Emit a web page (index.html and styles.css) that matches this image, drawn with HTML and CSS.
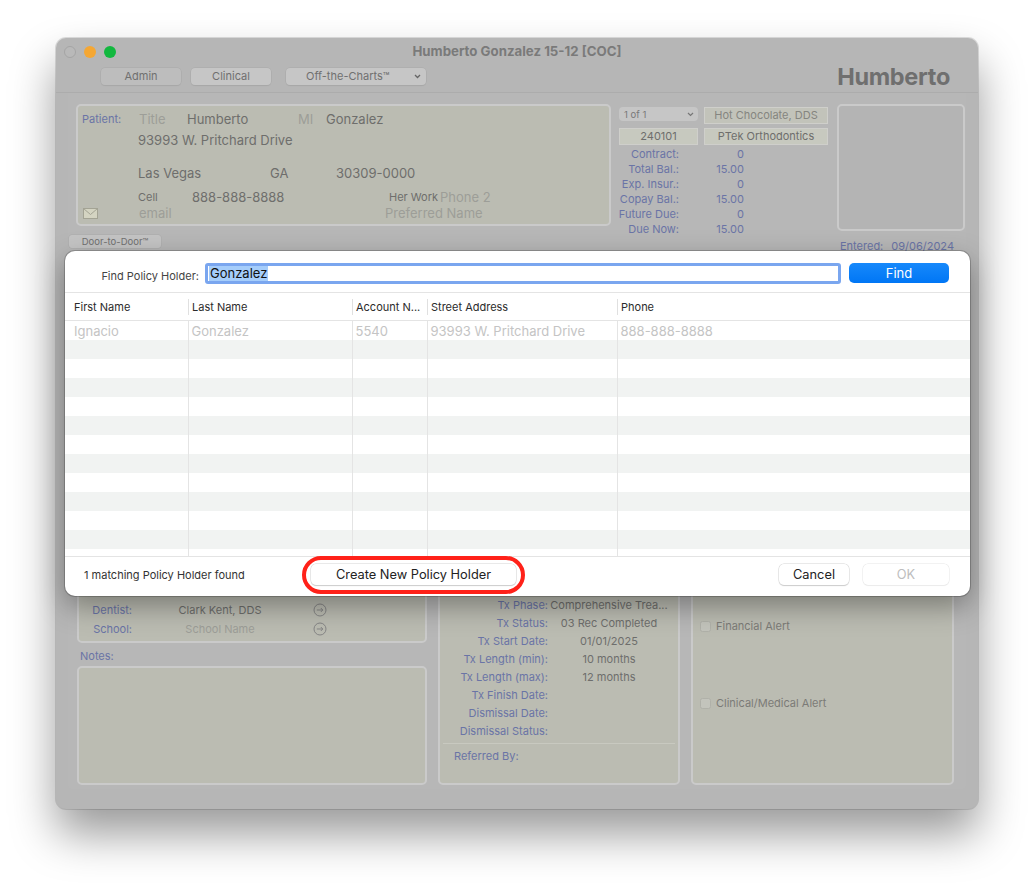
FILE: index.html
```html
<!DOCTYPE html>
<html lang="en">
<head>
    <meta charset="utf-8">
    <title>Humberto Gonzalez 15-12 [COC]</title>
    <link rel="stylesheet" href="styles.css">
</head>
<body>
    <div class="window">
        <div class="titlebar">
            <div class="lights">
                <span class="light light_close"></span>
                <span class="light light_min"></span>
                <span class="light light_max"></span>
            </div>
            <div class="title">Humberto Gonzalez 15-12 [COC]</div>
        </div>
        <div class="toolbar">
            <div class="tool_btn tool_admin">Admin</div>
            <div class="tool_btn tool_clinical">Clinical</div>
            <div class="tool_btn tool_charts">
                <span>Off-the-Charts™</span>
                <svg class="chevron" width="7" height="5" viewBox="0 0 7 5"><path d="M1 1l2.5 2.5L6 1" fill="none" stroke="#666" stroke-width="1.3"/></svg>
            </div>
            <div class="big_name">Humberto</div>
        </div>

        <div class="content">
            <div class="top_row">
                <div class="top_left">
                    <div class="panel patient">
                        <div class="prow prow_name">
                            <span class="blue small">Patient:</span>
                            <span class="ph">Title</span>
                            <span>Humberto</span>
                            <span class="ph">MI</span>
                            <span>Gonzalez</span>
                        </div>
                        <div class="prow prow_addr">
                            <span></span>
                            <span>93993 W. Pritchard Drive</span>
                        </div>
                        <div class="prow prow_city">
                            <span></span>
                            <span>Las Vegas</span>
                            <span>GA</span>
                            <span>30309-0000</span>
                        </div>
                        <div class="prow prow_phone">
                            <span></span>
                            <span class="small">Cell</span>
                            <span>888-888-8888</span>
                            <span class="small">Her Work</span>
                            <span class="ph">Phone 2</span>
                        </div>
                        <div class="prow prow_email">
                            <svg class="envelope" width="15" height="11" viewBox="0 0 15 11"><rect x="0.5" y="0.5" width="14" height="10" fill="#d4d4c2" stroke="#a3a394"/><path d="M0.5 0.5L7.5 6.5L14.5 0.5" fill="none" stroke="#a3a394"/></svg>
                            <span class="ph">email</span>
                            <span class="ph">Preferred Name</span>
                        </div>
                    </div>
                    <div class="door_btn">Door-to-Door™</div>
                </div>

                <div class="top_mid">
                    <div class="mid_fields">
                        <div class="mini_select"><span>1 of 1</span><svg width="7" height="5" viewBox="0 0 7 5"><path d="M1 1l2.5 2.5L6 1" fill="none" stroke="#777" stroke-width="1.2"/></svg></div>
                        <div class="mini_field muted">Hot Chocolate, DDS</div>
                        <div class="mini_field">240101</div>
                        <div class="mini_field">PTek Orthodontics</div>
                    </div>
                    <dl class="balances">
                        <dt>Contract:</dt><dd>0</dd>
                        <dt>Total Bal.:</dt><dd>15.00</dd>
                        <dt>Exp. Insur.:</dt><dd>0</dd>
                        <dt>Copay Bal.:</dt><dd>15.00</dd>
                        <dt>Future Due:</dt><dd>0</dd>
                        <dt>Due Now:</dt><dd>15.00</dd>
                    </dl>
                </div>

                <div class="top_right">
                    <div class="photo"></div>
                    <div class="entered"><span>Entered:</span><span>09/06/2024</span></div>
                </div>
            </div>

            <div class="lower">
                <div class="lower_left">
                    <div class="panel contacts">
                        <div class="contact_row">
                            <span class="blue">Dentist:</span>
                            <span class="contact_val">Clark Kent, DDS</span>
                            <svg width="14" height="14" viewBox="0 0 14 14"><circle cx="7" cy="7" r="6" fill="none" stroke="#858585"/><path d="M3.8 7h6M7.8 5l2 2-2 2" fill="none" stroke="#858585"/></svg>
                        </div>
                        <div class="contact_row">
                            <span class="blue">School:</span>
                            <span class="contact_val ph">School Name</span>
                            <svg width="14" height="14" viewBox="0 0 14 14"><circle cx="7" cy="7" r="6" fill="none" stroke="#858585"/><path d="M3.8 7h6M7.8 5l2 2-2 2" fill="none" stroke="#858585"/></svg>
                        </div>
                    </div>
                    <div class="notes_label blue">Notes:</div>
                    <div class="panel notes"></div>
                </div>

                <div class="panel treatment">
                    <dl class="tx_list">
                        <dt>Tx Phase:</dt><dd class="tx_long">Comprehensive Trea...</dd>
                        <dt>Tx Status:</dt><dd>03 Rec Completed</dd>
                        <dt>Tx Start Date:</dt><dd>01/01/2025</dd>
                        <dt>Tx Length (min):</dt><dd>10 months</dd>
                        <dt>Tx Length (max):</dt><dd>12 months</dd>
                        <dt>Tx Finish Date:</dt><dd></dd>
                        <dt>Dismissal Date:</dt><dd></dd>
                        <dt>Dismissal Status:</dt><dd></dd>
                    </dl>
                    <div class="referred blue">Referred By:</div>
                </div>

                <div class="panel alerts">
                    <div class="alert alert_fin"><span class="check"></span>Financial Alert</div>
                    <div class="alert alert_med"><span class="check"></span>Clinical/Medical Alert</div>
                </div>
            </div>
        </div>

        <div class="sheet">
            <div class="find_row">
                <label class="find_label">Find Policy Holder:</label>
                <div class="find_input"><span class="selected">Gonzalez</span></div>
                <div class="btn_find">Find</div>
            </div>
            <div class="table_wrap">
                <table class="results">
                    <colgroup><col class="c1"><col class="c2"><col class="c3"><col class="c4"><col class="c5"></colgroup>
                    <thead>
                        <tr><th><div>First Name</div></th><th><div>Last Name</div></th><th><div>Account N...</div></th><th><div>Street Address</div></th><th><div>Phone</div></th></tr>
                    </thead>
                    <tbody>
                        <tr><td>Ignacio</td><td>Gonzalez</td><td>5540</td><td>93993 W. Pritchard Drive</td><td>888-888-8888</td></tr>
                        <tr><td></td><td></td><td></td><td></td><td></td></tr>
                        <tr><td></td><td></td><td></td><td></td><td></td></tr>
                        <tr><td></td><td></td><td></td><td></td><td></td></tr>
                        <tr><td></td><td></td><td></td><td></td><td></td></tr>
                        <tr><td></td><td></td><td></td><td></td><td></td></tr>
                        <tr><td></td><td></td><td></td><td></td><td></td></tr>
                        <tr><td></td><td></td><td></td><td></td><td></td></tr>
                        <tr><td></td><td></td><td></td><td></td><td></td></tr>
                        <tr><td></td><td></td><td></td><td></td><td></td></tr>
                        <tr><td></td><td></td><td></td><td></td><td></td></tr>
                        <tr><td></td><td></td><td></td><td></td><td></td></tr>
                        <tr><td></td><td></td><td></td><td></td><td></td></tr>
                    </tbody>
                </table>
            </div>
            <div class="sheet_footer">
                <div class="found">1 matching Policy Holder found</div>
                <div class="btn btn_create">
                    Create New Policy Holder
                    <span class="ring"></span>
                </div>
                <div class="btn btn_cancel">Cancel</div>
                <div class="btn btn_ok">OK</div>
            </div>
        </div>
    </div>
</body>
</html>
```

FILE: styles.css
```css
* {
    box-sizing: border-box;
}

html, body {
    height: 100%;
}

body {
    margin: 0;
    padding-top: 38px;
    background: #fff;
    font-family: Inter, "Liberation Sans", sans-serif;
    color: #6e6e6c;
    font-size: 13px;
}

.window {
    position: relative;
    width: 922px;
    height: 771px;
    margin-left: 56px;
    display: flex;
    flex-direction: column;
    background: #b6b6b6;
    border-radius: 10px;
    box-shadow: 0 25px 45px rgba(0, 0, 0, 0.4), 0 0 0 1px rgba(0, 0, 0, 0.12);
}

/* Title bar */
.titlebar {
    position: relative;
    height: 26px;
    display: flex;
    align-items: flex-end;
    justify-content: center;
}

.lights {
    position: absolute;
    left: 8px;
    top: 8px;
    display: flex;
    gap: 8px;
}

.light {
    width: 12px;
    height: 12px;
    border-radius: 50%;
}

.light_close {
    background: #b9b9b9;
    border: 1px solid #a5a5a5;
}

.light_min {
    background: #f5a733;
}

.light_max {
    background: #12b83f;
}

.title {
    font-size: 13.25px;
    font-weight: 700;
    color: #7a7a7a;
    line-height: 26px;
    height: 26px;
}

.toolbar {
    height: 29px;
    display: flex;
    align-items: flex-start;
    padding: 4px 28px 0 45px;
    border-bottom: 1px solid #acacac;
}

.tool_btn {
    height: 17px;
    border-radius: 4px;
    background: #bdbdbd;
    box-shadow: 0 0 0 0.5px #a8a8a8, 0 1px 1px rgba(0, 0, 0, 0.08);
    font-size: 11px;
    line-height: 17px;
    text-align: center;
    color: #707070;
}

.tool_admin {
    width: 80px;
}

.tool_clinical {
    width: 80px;
    margin-left: 10px;
    background: #c6c6c6;
}

.tool_charts {
    width: 140px;
    margin-left: 15px;
    background: #c6c6c6;
    display: flex;
    align-items: center;
    justify-content: space-between;
    padding: 0 5px 0 20px;
}

.big_name {
    margin-left: auto;
    margin-top: -3px;
    font-size: 23.5px;
    font-weight: 700;
    letter-spacing: -0.3px;
    line-height: 24px;
    color: #6f6f6f;
}

/* Form behind the sheet */
.content {
    flex: 1;
    display: flex;
    flex-direction: column;
    margin: 0 12px 20px 12px;
    padding: 11px 0 0 1px;
    background: #b7b7b7;
    border-radius: 0 0 4px 4px;
}

.top_row {
    display: flex;
    height: 148px;
}

.panel {
    background: #bbbcb2;
    border: 2px solid #cacaca;
    border-radius: 5px;
}

.top_left {
    width: 542px;
}

.patient {
    width: 535px;
    height: 122px;
    margin-left: 7px;
    padding: 2px 0 0 4px;
}

.prow {
    display: grid;
    align-items: center;
    white-space: nowrap;
}

.prow_name {
    height: 21px;
    grid-template-columns: 57px 48px 111px 28px 1fr;
}

.prow_addr {
    height: 21px;
    grid-template-columns: 56px 1fr;
}

.prow_city {
    height: 21px;
    margin-top: 12px;
    grid-template-columns: 56px 132px 66px 1fr;
}

.prow_phone {
    height: 16px;
    margin-top: 6px;
    grid-template-columns: 56px 54px 197px 51px 1fr;
}

.prow_email {
    height: 16px;
    grid-template-columns: 57px 246px 1fr;
}

.envelope {
    margin-left: 1px;
}

.small {
    font-size: 11px;
}

.blue {
    color: #6a74a6;
    font-size: 11px;
}

.ph {
    color: #9d9e98;
}

.door_btn {
    width: 92px;
    height: 13px;
    margin-top: 9px;
    border-radius: 3px;
    background: #c4c4c4;
    box-shadow: 0 0 0 0.5px #ababab;
    font-size: 9.5px;
    line-height: 13px;
    text-align: center;
    color: #707070;
}

.top_mid {
    width: 210px;
    margin-left: 7px;
    font-size: 11px;
}

.mid_fields {
    display: grid;
    grid-template-columns: 79px 124px;
    grid-template-rows: 17px 17px;
    column-gap: 6px;
    row-gap: 4px;
    margin: 3px 0 0 1px;
}

.mini_select {
    height: 14px;
    padding: 0 4px 0 5px;
    display: flex;
    align-items: center;
    justify-content: space-between;
    background: #c6c6c6;
    border-radius: 4px;
    font-size: 9.5px;
    color: #787878;
}

.mini_field {
    background: #c7c9bf;
    border: 1px solid #cfcfcb;
    line-height: 15px;
    text-align: center;
    white-space: nowrap;
}

.muted {
    background: #c2c3ba;
    color: #858580;
}

.balances {
    display: grid;
    grid-template-columns: 61px 65px;
    grid-auto-rows: 15px;
    margin: 2px 0 0 0;
    line-height: 15px;
    color: #6a74a6;
    white-space: nowrap;
}

.balances dt {
    text-align: right;
}

.balances dd {
    margin: 0;
    text-align: right;
}

.top_right {
    width: 128px;
    margin-left: 9px;
}

.photo {
    height: 127px;
    border: 2px solid #cacaca;
    border-radius: 5px;
    background: #b4b4b4;
}

.entered {
    display: flex;
    justify-content: space-between;
    margin: 8px 11px 0 3px;
    font-size: 11px;
    line-height: 14px;
    color: #6a74a6;
}

.lower {
    flex: 1;
    display: flex;
    gap: 11px;
    margin-top: 10px;
    padding: 0 0 4px 8px;
    font-size: 11px;
}

.lower_left {
    width: 350px;
    display: flex;
    flex-direction: column;
}

.contacts {
    flex: 1;
    display: flex;
    flex-direction: column;
    justify-content: flex-end;
    padding-bottom: 3px;
}

.contact_row {
    height: 19px;
    display: grid;
    grid-template-columns: 53px 1fr 14px;
    align-items: center;
    padding-right: 98px;
    text-align: right;
}

.contact_val {
    text-align: center;
    padding-right: 5px;
}

.notes_label {
    height: 23px;
    padding: 6px 0 0 3px;
    line-height: 14px;
}

.notes {
    height: 119px;
}

.treatment {
    width: 242px;
    display: flex;
    flex-direction: column;
    justify-content: flex-end;
    padding: 0 0 20px 0;
}

.tx_list {
    display: grid;
    grid-template-columns: 105px 1fr;
    grid-auto-rows: 18px;
    margin: 0 3px;
    padding-bottom: 3px;
    line-height: 18px;
    white-space: nowrap;
    border-bottom: 1px solid #c8c9c0;
}

.tx_list dt {
    color: #6a74a6;
    text-align: right;
}

.tx_list dd {
    margin: 0;
    padding-right: 5px;
    text-align: center;
}

.tx_long {
    overflow: hidden;
}

.referred {
    margin: 5px 0 0 14px;
    line-height: 14px;
}

.alerts {
    width: 263px;
    display: flex;
    flex-direction: column;
    justify-content: flex-end;
    padding: 0 0 73px 7px;
}

.alert {
    display: flex;
    align-items: center;
    gap: 5px;
    height: 14px;
    color: #7b7b77;
}

.alert_fin {
    margin-bottom: 63px;
}

.check {
    width: 11px;
    height: 11px;
    border-radius: 2.5px;
    background: #c3c4bc;
    border: 1px solid #b0b1a9;
}

/* Sheet dialog on top of the window */
.sheet {
    position: absolute;
    left: 9px;
    top: 213px;
    width: 905px;
    height: 345px;
    display: flex;
    flex-direction: column;
    background: #fff;
    border-radius: 10px;
    box-shadow: 0 10px 28px rgba(0, 0, 0, 0.35), 0 0 0 1px rgba(0, 0, 0, 0.2);
    color: #222;
}

.find_row {
    height: 42px;
    display: flex;
    align-items: flex-start;
    padding-top: 12px;
    border-bottom: 1px solid #e4e4e4;
}

.find_label {
    width: 134px;
    padding-top: 6px;
    text-align: right;
    font-size: 11px;
    line-height: 14px;
    color: #444;
}

.find_input {
    width: 636px;
    height: 21px;
    margin-left: 6px;
    padding-left: 1px;
    border: 3px solid #7aa6ef;
    border-radius: 3px;
    line-height: 15px;
    color: #111;
    display: flex;
    align-items: center;
}

.selected {
    background: #a5cdfb;
    padding: 0 1px;
    height: 15px;
}

.btn_find {
    width: 100px;
    height: 20px;
    margin-left: 8px;
    border-radius: 5px;
    background: linear-gradient(#1789fb, #0076f5);
    color: #fff;
    line-height: 20px;
    text-align: center;
}

.table_wrap {
    height: 264px;
    overflow: hidden;
    border-bottom: 1px solid #e4e4e4;
}

.results {
    width: 905px;
    table-layout: fixed;
    border-collapse: collapse;
}

.c1 { width: 123px; }
.c2 { width: 164px; }
.c3 { width: 75px; }
.c4 { width: 190px; }

.results th {
    height: 27px;
    padding: 1px 0 0;
    font-weight: 400;
    font-size: 11px;
    text-align: left;
    color: #2b2b2b;
    border-bottom: 1px solid #e4e4e4;
}

.results th div {
    height: 16px;
    line-height: 16px;
    padding-left: 3px;
    border-left: 1px solid #e0e0e0;
    white-space: nowrap;
}

.results th:first-child div {
    padding-left: 9px;
    border-left: none;
}

.results td {
    height: 19px;
    padding: 1px 0 0 3px;
    line-height: 18px;
    color: #c4c4c4;
    border-left: 1px solid #e4e4e4;
    white-space: nowrap;
}

.results td:first-child {
    padding-left: 9px;
    border-left: none;
}

.results tbody tr:nth-child(even) {
    background: #f1f3f2;
}

.sheet_footer {
    flex: 1;
    display: flex;
    align-items: flex-start;
    padding-top: 7px;
}

.found {
    width: 246px;
    padding: 4px 0 0 19px;
    font-size: 11px;
    line-height: 14px;
    color: #333;
}

.btn {
    position: relative;
    height: 21px;
    border-radius: 5px;
    background: #fff;
    box-shadow: 0 0 0 0.5px #d4d4d4, 0 1px 1px rgba(0, 0, 0, 0.22);
    font-size: 12.8px;
    line-height: 21px;
    text-align: center;
    color: #222;
}

.btn_create {
    width: 205px;
}

.ring {
    position: absolute;
    left: -9px;
    top: -8px;
    width: 223px;
    height: 38px;
    border: 4px solid #ff2119;
    border-radius: 19px;
}

.btn_cancel {
    width: 70px;
    margin-left: 263px;
}

.btn_ok {
    width: 86px;
    margin-left: 14px;
    color: #bdbdbd;
    box-shadow: 0 0 0 0.5px #e6e6e6, 0 1px 1px rgba(0, 0, 0, 0.06);
}
```
